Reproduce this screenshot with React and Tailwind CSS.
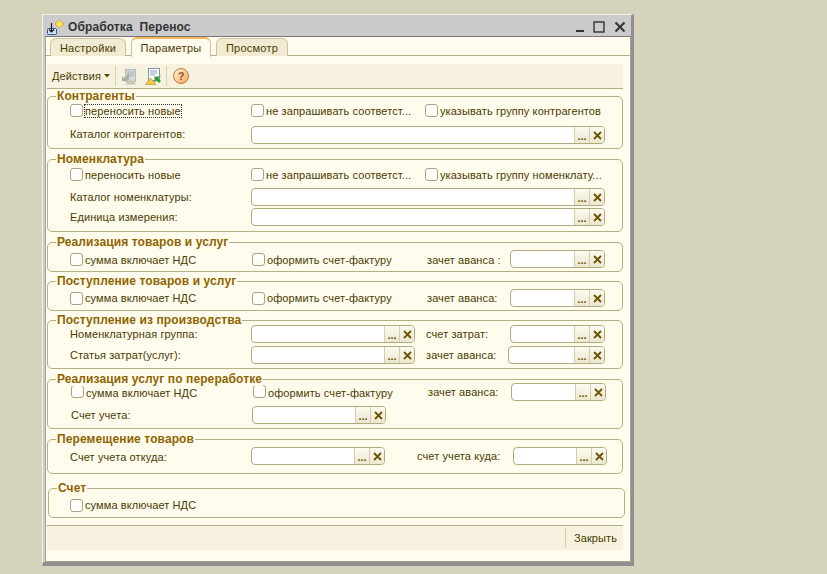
const FONT = "font-['Liberation_Sans',Arial,sans-serif]";

function Check({ className = "" }) {
  return <span className={`block shrink-0 w-[13px] h-[13px] bg-[#fffefa] border border-[#a8a385] rounded-[3px] ${className}`} />;
}

function Label({ children, className = "" }) {
  return <span className={`whitespace-nowrap text-[11px] leading-[13px] tracking-[0.1px] text-[#4a3b00] ${className}`}>{children}</span>;
}

function Field({ className = "" }) {
  return (
    <span className={`flex shrink-0 h-[18px] border border-[#b0aa7e] rounded-[4px] bg-white overflow-hidden ${className}`}>
      <span className="flex-1" />
      <span className="w-[15px] border-l border-[#d3cfae] bg-gradient-to-b from-[#fdfaf0] to-[#ece7cf] flex items-end justify-center text-[11px] leading-[11px] font-bold text-[#6d5500] pb-[1px]">...</span>
      <span className="w-[15px] border-l border-[#d3cfae] bg-gradient-to-b from-[#fdfaf0] to-[#ece7cf] flex items-center justify-center">
        <svg width="9" height="9" viewBox="0 0 9 9"><path d="M1 1 L8 8 M8 1 L1 8" stroke="#6a5400" strokeWidth="1.8" /></svg>
      </span>
    </span>
  );
}

function Group({ title, className = "", children }) {
  return (
    <section className={`relative border border-[#b5af85] rounded-[5px] ${className}`}>
      <h3 className="absolute left-[8px] top-[-8px] px-[1px] bg-[#fffcee] text-[12px] leading-[14px] font-bold tracking-[0.1px] text-[#8f6400] whitespace-nowrap">{title}</h3>
      {children}
    </section>
  );
}

function Tab({ children, active, className = "" }) {
  return (
    <div className={`flex items-center justify-center rounded-t-[6px] border border-b-0 border-[#c9c49e] text-[11px] leading-[14px] tracking-[0.25px] text-[#4a3b00] ${active ? "h-[20px] bg-[#fffcee] border-t-2 border-t-[#f0b860] relative z-10" : "h-[18px] mt-[1px] bg-[#f0ebd2]"} ${className}`}>
      {children}
    </div>
  );
}

function WindowIcon() {
  return (
    <svg width="18" height="16" viewBox="0 0 18 16" className="shrink-0">
      <rect x="0.5" y="9.5" width="9" height="6" rx="1" fill="#cfe0f2" stroke="#2c5d96" />
      <path d="M4.5 4 V13 M2 10.5 L4.5 13 L7 10.5" stroke="#1a1a1a" strokeWidth="1.2" fill="none" />
      <path d="M12.5 1 L17 5 L12.5 9 L8 5 Z" fill="#fbe65e" stroke="#d8a830" />
    </svg>
  );
}

function DocIconGray() {
  return (
    <svg width="17" height="17" viewBox="0 0 17 17">
      <rect x="5.5" y="1.5" width="10" height="12" fill="#d6dcdc" stroke="#b0b8b8" />
      <path d="M7 4 H14 M7 6 H14 M7 8 H14" stroke="#a9b2b2" />
      <path d="M9 5 L9 11 L11 9 L7 13 L2 13 L2 8 L4 10 Z" fill="#a4b4a2" />
      <path d="M5 16.5 L11 11 L16.5 16.5 Z" fill="#c9c7b5" />
    </svg>
  );
}

function DocIconColor() {
  return (
    <svg width="17" height="17" viewBox="0 0 17 17">
      <rect x="3.5" y="0.5" width="11" height="12" fill="#fff" stroke="#7d98ae" />
      <path d="M5 3 H12 M5 5 H12 M5 7 H10" stroke="#8aa3b8" />
      <path d="M0.5 16.5 L5.5 10 L11 16.5 Z" fill="#f5c842" stroke="#c8942a" strokeWidth="0.7" />
      <path d="M16 6 L16 8 L13.5 10.5 L16 13 L14 15 L11.5 12.5 L9.5 14.5 L9.5 8.5 L15.5 8.5 Z" fill="#2f9e3a" />
    </svg>
  );
}

function HelpIcon() {
  return (
    <span className="flex items-center justify-center w-[16px] h-[16px] rounded-full border border-[#c8752a] bg-gradient-to-br from-[#fff3d8] to-[#f2a860] text-[11px] leading-[11px] font-bold text-[#8c5a2a]">?</span>
  );
}

function Sep() {
  return <span className="block w-px h-[20px] bg-[#d8d2ac]" />;
}

export default function App() {
  return (
    <div className={`w-[827px] h-[574px] overflow-hidden bg-[#d5d3bb] pt-[14px] pl-[42px] ${FONT}`}>
      <div className="w-[592px] h-[552px] flex flex-col bg-[#cbcbcb] border-t border-l border-[#f2f2ea] border-r-[3px] border-b-[4px] border-r-[#8f8f8f] border-b-[#8f8f8f]">
        {/* Title bar */}
        <header className="flex items-center h-[21px] pt-[2px] pl-[4px] pr-[5px] shrink-0">
          <WindowIcon />
          <span className="ml-[3px] text-[12px] leading-[14px] font-bold tracking-[0.1px] text-[#333] whitespace-pre">Обработка  Перенос</span>
          <span className="ml-auto flex items-center">
            <svg width="12" height="12" viewBox="0 0 12 12"><rect x="2" y="9" width="8" height="2" fill="#333" /></svg>
            <svg width="12" height="12" viewBox="0 0 12 12" className="ml-[7px]"><rect x="1" y="1" width="10" height="10" fill="none" stroke="#333" strokeWidth="1.4" /></svg>
            <svg width="12" height="12" viewBox="0 0 12 12" className="ml-[9px]"><path d="M1.5 1.5 L10.5 10.5 M10.5 1.5 L1.5 10.5" stroke="#333" strokeWidth="2" /></svg>
          </span>
        </header>

        {/* Content */}
        <div className="flex-1 flex flex-col ml-[2px] bg-[#fffcee] border border-x-[#a8a68e] border-t-[#777] border-b-[#a8a68e]">
          {/* Tabs */}
          <nav className="flex items-start h-[19px] pl-[4px] shrink-0 border-b border-[#b5af85]">
            <Tab className="w-[76px]">Настройки</Tab>
            <Tab active className="w-[80px] ml-[5px]">Параметры</Tab>
            <Tab className="w-[72px] ml-[5px]">Просмотр</Tab>
          </nav>

          <main className="flex-1 flex flex-col pl-[1px] pr-[7px]">
            {/* Toolbar */}
            <div className="mt-[8px] h-[25px] shrink-0 flex items-center bg-[#f6f2df] border-b border-[#b5af85] pl-[5px]">
              <span className="text-[11px] leading-[13px] tracking-[0.1px] text-[#4a3b00]">Действия</span>
              <svg width="6" height="4" viewBox="0 0 6 4" className="ml-[3px]"><path d="M0 0 H6 L3 3.5 Z" fill="#5a4800" /></svg>
              <span className="ml-[5px]"><Sep /></span>
              <span className="ml-[4px]"><DocIconGray /></span>
              <span className="ml-[8px]"><DocIconColor /></span>
              <span className="ml-[4px]"><Sep /></span>
              <span className="ml-[6px]"><HelpIcon /></span>
            </div>

            {/* Контрагенты */}
            <Group title="Контрагенты" className="mt-[7px] h-[53px]">
              <div className="flex items-center h-[13px] mt-[7px] ml-[22px]">
                <Check />
                <Label className="ml-[2px] pt-[2px] w-[166px]"><span className="outline-1 outline-dotted outline-[#333]">переносить новые</span></Label>
                <Check />
                <Label className="ml-[2px] pt-[2px] w-[159px]">не запрашивать соответст...</Label>
                <Check />
                <Label className="ml-[2px] pt-[2px]">указывать группу контрагентов</Label>
              </div>
              <div className="flex items-center mt-[9px] ml-[22px]">
                <Label className="w-[181px] pb-[1px]">Каталог контрагентов:</Label>
                <Field className="w-[354px]" />
              </div>
            </Group>

            {/* Номенклатура */}
            <Group title="Номенклатура" className="mt-[10px] h-[73px]">
              <div className="flex items-center h-[13px] mt-[8px] ml-[22px]">
                <Check />
                <Label className="ml-[2px] pt-[2px] w-[166px]">переносить новые</Label>
                <Check />
                <Label className="ml-[2px] pt-[2px] w-[159px]">не запрашивать соответст...</Label>
                <Check />
                <Label className="ml-[2px] pt-[2px]">указывать группу номенклату...</Label>
              </div>
              <div className="flex items-center mt-[7px] ml-[22px]">
                <Label className="w-[181px]">Каталог номенклатуры:</Label>
                <Field className="w-[354px]" />
              </div>
              <div className="flex items-center mt-[2px] ml-[22px]">
                <Label className="w-[181px] pt-[1px]">Единица измерения:</Label>
                <Field className="w-[354px]" />
              </div>
            </Group>

            {/* Реализация товаров и услуг */}
            <Group title="Реализация товаров и услуг" className="mt-[10px] h-[30px]">
              <div className="flex items-center mt-[7px] ml-[22px]">
                <Check />
                <Label className="ml-[2px] pt-[2px] w-[167px]">сумма включает НДС</Label>
                <Check />
                <Label className="ml-[2px] pt-[2px] w-[160px]">оформить счет-фактуру</Label>
                <Label className="w-[83px] pt-[2px]">зачет аванса :</Label>
                <Field className="w-[95px]" />
              </div>
            </Group>

            {/* Поступление товаров и услуг */}
            <Group title="Поступление товаров и услуг" className="mt-[9px] h-[30px]">
              <div className="flex items-center mt-[7px] ml-[22px]">
                <Check />
                <Label className="ml-[2px] pt-[1px] w-[167px]">сумма включает НДС</Label>
                <Check />
                <Label className="ml-[2px] pt-[1px] w-[160px]">оформить счет-фактуру</Label>
                <Label className="w-[83px] pt-[1px]">зачет аванса:</Label>
                <Field className="w-[95px]" />
              </div>
            </Group>

            {/* Поступление из производства */}
            <Group title="Поступление из производства" className="mt-[9px] h-[49px]">
              <div className="flex items-center mt-[4px] ml-[22px]">
                <Label className="w-[181px]">Номенклатурная группа:</Label>
                <Field className="w-[164px]" />
                <Label className="ml-[11px] w-[84px]">счет затрат:</Label>
                <Field className="w-[95px]" />
              </div>
              <div className="flex items-center mt-[3px] ml-[22px]">
                <Label className="w-[181px]">Статья затрат(услуг):</Label>
                <Field className="w-[164px]" />
                <Label className="ml-[11px] w-[82px]">зачет аванса:</Label>
                <Field className="w-[97px]" />
              </div>
            </Group>

            {/* Реализация услуг по переработке */}
            <Group title="Реализация услуг по переработке" className="mt-[10px] h-[50px]">
              <div className="flex items-center mt-[3px] ml-[23px]">
                <Check className="mt-[-1px]" />
                <Label className="ml-[2px] pt-[2px] w-[167px]">сумма включает НДС</Label>
                <Check className="mt-[-1px]" />
                <Label className="ml-[2px] pt-[2px] w-[160px]">оформить счет-фактуру</Label>
                <Label className="w-[83px] pt-[1px]">зачет аванса:</Label>
                <Field className="w-[95px]" />
              </div>
              <div className="flex items-center mt-[5px] ml-[23px]">
                <Label className="w-[181px]">Счет учета:</Label>
                <Field className="w-[134px]" />
              </div>
            </Group>

            {/* Перемещение товаров */}
            <Group title="Перемещение товаров" className="mt-[10px] h-[35px]">
              <div className="flex items-center mt-[7px] ml-[22px]">
                <Label className="w-[181px] pt-[3px]">Счет учета откуда:</Label>
                <Field className="w-[134px]" />
                <Label className="ml-[32px] w-[96px] pt-[1px]">счет учета куда:</Label>
                <Field className="w-[94px]" />
              </div>
            </Group>

            {/* Счет */}
            <Group title="Счет" className="mt-[14px] ml-[1px] mr-[-2px] h-[30px]">
              <div className="flex items-center mt-[9px] ml-[21px]">
                <Check />
                <Label className="ml-[2px] pt-[1px]">сумма включает НДС</Label>
              </div>
            </Group>

            {/* Footer */}
            <footer className="mt-[7px] h-[25px] shrink-0 flex items-center justify-end bg-[#f6f2df] border-t border-[#b5af85]">
              <Sep />
              <Label className="ml-[8px] mr-[6px]">Закрыть</Label>
            </footer>
          </main>
        </div>
      </div>
    </div>
  );
}
